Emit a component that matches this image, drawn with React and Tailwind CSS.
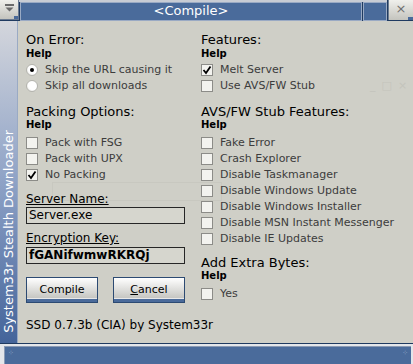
import React from 'react';

const Check = ({ checked }) => (
  <div className="w-[12px] h-[12px] shrink-0 border border-[#8c8c88] bg-[#f3f3ef] flex items-center justify-center">
    {checked && (
      <svg width="10" height="10" viewBox="0 0 10 10">
        <path d="M1.5 5 L4 8 L8.5 1.5" fill="none" stroke="#000" strokeWidth="1.8" />
      </svg>
    )}
  </div>
);

const Radio = ({ checked }) => (
  <div className="w-[12px] h-[12px] shrink-0 rounded-full border border-[#b4b4ae] bg-[radial-gradient(circle_at_60%_40%,#ffffff_55%,#d8d8d2)] flex items-center justify-center">
    {checked && <div className="w-[4px] h-[4px] rounded-full bg-black" />}
  </div>
);

const Row = ({ children, label }) => (
  <div className="h-[16px] flex items-center">
    {children}
    <span className="ml-[7px] text-[11px] leading-[16px] text-[#3c3c3c] whitespace-nowrap">{label}</span>
  </div>
);

const Heading = ({ children, className = '' }) => (
  <div className={`h-[15px] text-[13px] leading-[15px] text-black whitespace-nowrap ${className}`}>{children}</div>
);

const Help = () => <div className="h-[12px] text-[10px] leading-[12px] font-bold text-black">Help</div>;

const Field = ({ value, bold }) => (
  <div className={`h-[17px] w-[159px] border border-[#262626] bg-[#d6d6ce] px-[2px] text-[12px] leading-[15px] text-black ${bold ? 'font-bold' : ''}`}>
    {value}
  </div>
);

const Btn = ({ children }) => (
  <div className="w-[72px] h-[26px] border border-[#2c4a72] flex flex-col">
    <div className="flex-1 bg-gradient-to-b from-white to-[#c6c6c2] text-center text-[11px] leading-[14px] pt-[5px] text-black">
      {children}
    </div>
    <div className="h-[4px] border-t border-[#e8e8e8] bg-[#4a6a9a]" />
  </div>
);

export default function App() {
  return (
    <div className="relative w-[413px] h-[364px] overflow-hidden bg-[#cfcfc7] font-['DejaVu_Sans',sans-serif] flex flex-col">
      {/* title bar */}
      <div className="h-[21px] flex shrink-0 bg-[#1f3a60]">
        <div className="w-[19px] h-[20px] bg-gradient-to-b from-[#f0f0ec] to-[#c4c4be] border-r border-b border-[#6a7a90] flex items-start justify-center pt-[4px] relative">
          <svg width="9" height="8" viewBox="0 0 9 8">
            <rect x="0" y="0" width="9" height="2" fill="#6a6a6a" />
            <path d="M0.5 3.5 L8.5 3.5 L4.5 7.5 Z" fill="#6a6a6a" />
          </svg>
          <div className="absolute right-0 bottom-0 w-[4px] h-[3px] bg-[#4a6a9a]" />
        </div>
        <div className="flex-1 flex border-t-2 border-[#c8ccd4]">
          <div className="flex-1 ml-[1px] border border-[#9aaac4] bg-[#4a6b9b] text-center text-white text-[13px] leading-[15px]">
            &lt;Compile&gt;
          </div>
          <div className="w-[24px] ml-[1px] border border-[#9aaac4] bg-[#4a6b9b]" />
        </div>
        <div className="w-[25px] h-[20px] ml-[1px] bg-gradient-to-b from-[#f0f0ec] to-[#c4c4be] border-l border-[#6a7a90] flex items-start justify-center pt-[3px] relative text-[#707070] text-[13px] leading-[12px]">
          ×
          <div className="absolute right-0 bottom-0 w-[5px] h-[3px] bg-[#4a6a9a]" />
        </div>
      </div>

      <div className="flex flex-1 relative">
        {/* side bar */}
        <div className="w-[18px] shrink-0 bg-gradient-to-b from-[#d4d6dc] via-[#8ea2c6] to-[#44649a] border-r border-[#9aaac4] flex flex-col justify-end items-center pb-[10px]">
          <div className="[writing-mode:vertical-rl] rotate-180 text-white text-[13px] leading-[14px] whitespace-nowrap">
            System33r Stealth Downloader
          </div>
        </div>

        {/* faint window behind */}
        <div className="absolute left-[52px] top-[161px] w-[170px] h-[19px] border border-[#c8c8c0] pointer-events-none" />
        <div className="absolute left-[370px] top-[57px] flex gap-[6px] text-[11px] text-[#c4c4bc] pointer-events-none">
          <span>_</span><span>□</span><span>×</span>
        </div>

        {/* content */}
        <div className="relative flex-1 flex pl-[8px] pt-[11px]">
          <div className="w-[175px] flex flex-col">
            <Heading>On Error:</Heading>
            <div className="mt-[1px]"><Help /></div>
            <div className="mt-[2px]">
              <Row label="Skip the URL causing it"><Radio checked /></Row>
              <Row label="Skip all downloads"><Radio /></Row>
            </div>
            <Heading className="mt-[10px]">Packing Options:</Heading>
            <Help />
            <div className="mt-[4px]">
              <Row label="Pack with FSG"><Check /></Row>
              <Row label="Pack with UPX"><Check /></Row>
              <Row label="No Packing"><Check checked /></Row>
            </div>
            <div className="mt-[9px] h-[14px] text-[12px] leading-[14px] underline text-black">Server Name:</div>
            <div className="mt-[1px]"><Field value="Server.exe" /></div>
            <div className="mt-[7px] h-[14px] text-[12px] leading-[14px] underline text-black">Encryption Key:</div>
            <div className="mt-[2px]"><Field value="fGANifwmwRKRQj" bold /></div>
            <div className="mt-[13px] flex gap-[15px]">
              <Btn>Compile</Btn>
              <Btn><span className="underline">C</span>ancel</Btn>
            </div>
            <div className="mt-[15px] h-[14px] text-[12px] leading-[14px] text-black whitespace-nowrap">SSD 0.7.3b (CIA) by System33r</div>
          </div>

          <div className="flex-1 flex flex-col">
            <Heading>Features:</Heading>
            <div className="mt-[1px]"><Help /></div>
            <div className="mt-[2px]">
              <Row label="Melt Server"><Check checked /></Row>
              <Row label="Use AVS/FW Stub"><Check /></Row>
            </div>
            <Heading className="mt-[10px]">AVS/FW Stub Features:</Heading>
            <Help />
            <div className="mt-[4px]">
              <Row label="Fake Error"><Check /></Row>
              <Row label="Crash Explorer"><Check /></Row>
              <Row label="Disable Taskmanager"><Check /></Row>
              <Row label="Disable Windows Update"><Check /></Row>
              <Row label="Disable Windows Installer"><Check /></Row>
              <Row label="Disable MSN Instant Messenger"><Check /></Row>
              <Row label="Disable IE Updates"><Check /></Row>
            </div>
            <Heading className="mt-[8px]">Add Extra Bytes:</Heading>
            <Help />
            <div className="mt-[4px]">
              <Row label="Yes"><Check /></Row>
            </div>
          </div>
        </div>
      </div>

      {/* bottom bar */}
      <div className="h-[21px] shrink-0 border-t border-[#1f3a60] bg-[#e4e6ea] pt-[2px] pl-[4px] pr-[2px]">
        <div className="h-full border-l border-t border-[#8a9ab4] bg-[#4a6b9b] relative">
          <div className="absolute left-[3px] top-[3px] text-[#9ab0cc] text-[7px] leading-[7px]">⁘</div>
          <div className="absolute right-[3px] top-[3px] text-[#9ab0cc] text-[7px] leading-[7px]">⁘</div>
        </div>
      </div>
    </div>
  );
}
